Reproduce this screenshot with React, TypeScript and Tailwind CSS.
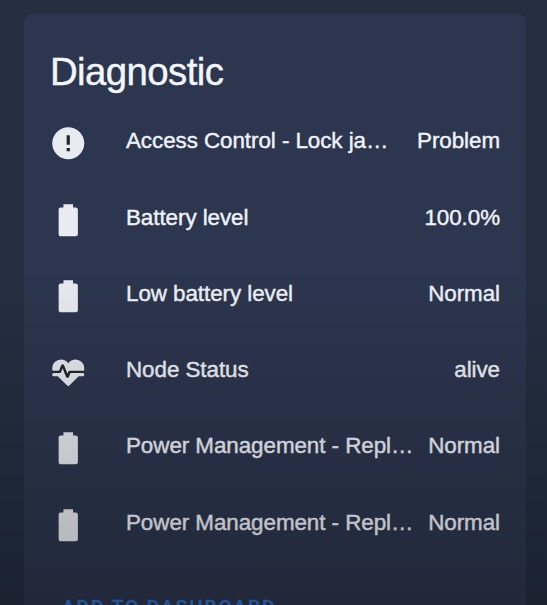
import React from 'react';

const icons = {
  alert:
    'M13,13H11V7H13M13,17H11V15H13M12,2A10,10 0 0,0 2,12A10,10 0 0,0 12,22A10,10 0 0,0 22,12A10,10 0 0,0 12,2Z',
  battery:
    'M16.67,4H15V2H9V4H7.33A1.33,1.33 0 0,0 6,5.33V20.67C6,21.4 6.6,22 7.33,22H16.67A1.33,1.33 0 0,0 18,20.67V5.33C18,4.6 17.4,4 16.67,4Z',
  heartPulse:
    'M7.5,4A5.5,5.5 0 0,0 2,9.5C2,10 2.09,10.5 2.22,11H6.3L7.57,7.63C7.87,6.83 9.05,6.75 9.43,7.63L11.5,13L12.09,11.58C12.22,11.25 12.57,11 13,11H21.78C21.91,10.5 22,10 22,9.5A5.5,5.5 0 0,0 16.5,4C14.64,4 13,4.93 12,6.34C11,4.93 9.36,4 7.5,4M3,12.5A1,1 0 0,0 2,13.5A1,1 0 0,0 3,14.5H5.44L11,20C12,20.9 12,20.9 13,20L18.56,14.5H21A1,1 0 0,0 22,13.5A1,1 0 0,0 21,12.5H13.4L12.47,14.8C12.07,15.81 10.92,15.67 10.55,14.83L8.5,9.5L7.54,11.83C7.39,12.21 7.05,12.5 6.6,12.5H3Z',
};

type Entity = {
  icon: keyof typeof icons;
  name: string;
  state: string;
};

const entities: Entity[] = [
  { icon: 'alert', name: 'Access Control - Lock ja…', state: 'Problem' },
  { icon: 'battery', name: 'Battery level', state: '100.0%' },
  { icon: 'battery', name: 'Low battery level', state: 'Normal' },
  { icon: 'heartPulse', name: 'Node Status', state: 'alive' },
  { icon: 'battery', name: 'Power Management - Repl…', state: 'Normal' },
  { icon: 'battery', name: 'Power Management - Repl…', state: 'Normal' },
];

function EntityIcon({ icon }: { icon: Entity['icon'] }) {
  return (
    <svg viewBox="0 0 24 24" className="mt-[5px] ml-[0.5px] size-[38.5px] shrink-0 fill-[#e8ebf0]">
      {icon === 'alert' && <circle cx="12" cy="12" r="8" className="fill-[#23262e]" />}
      {icon === 'heartPulse' && (
        <path
          d="M3 11.75H6.9L8.5 8.3L11.5 14.6L12.8 11.75H21"
          className="fill-none stroke-[#23262e] stroke-[1.6]"
        />
      )}
      <path d={icons[icon]} />
    </svg>
  );
}

function EntityRow({ icon, name, state }: Entity) {
  return (
    <div className="flex h-[76.25px] items-center">
      <EntityIcon icon={icon} />
      <span className="ml-[39px] whitespace-nowrap">{name}</span>
      <span className="ml-auto whitespace-nowrap">{state}</span>
    </div>
  );
}

export default function App() {
  return (
    <div className="relative h-[605px] overflow-hidden bg-[#242f42] px-6 pt-[14px] font-['Liberation_Sans',Arial,sans-serif]">
      <section className="h-[640px] w-[502px] rounded-lg bg-[#2c364e] pr-[26px] pl-6">
        <h1 className="pt-[34px] pl-0.5 text-[38.4px] leading-[48px] tracking-[-0.6px] text-[#f3f6fd] [-webkit-text-stroke:0.4px]">
          Diagnostic
        </h1>
        <div className="mt-[7px] text-[22.4px] tracking-[-0.06px] text-[#f0f3fb] [-webkit-text-stroke:0.4px]">
          {entities.map((entity, i) => (
            <EntityRow key={i} {...entity} />
          ))}
        </div>
        <button className="mt-[34px] ml-[14px] block font-[Roboto,sans-serif] text-[19px] leading-6 font-medium tracking-[2px] text-[#2f72d0] [-webkit-text-stroke:0.4px]">
          ADD TO DASHBOARD
        </button>
      </section>
      {/* fade towards the bottom */}
      <div className="pointer-events-none absolute inset-x-0 bottom-0 h-[345px] bg-linear-to-b from-transparent to-black/26" />
    </div>
  );
}
